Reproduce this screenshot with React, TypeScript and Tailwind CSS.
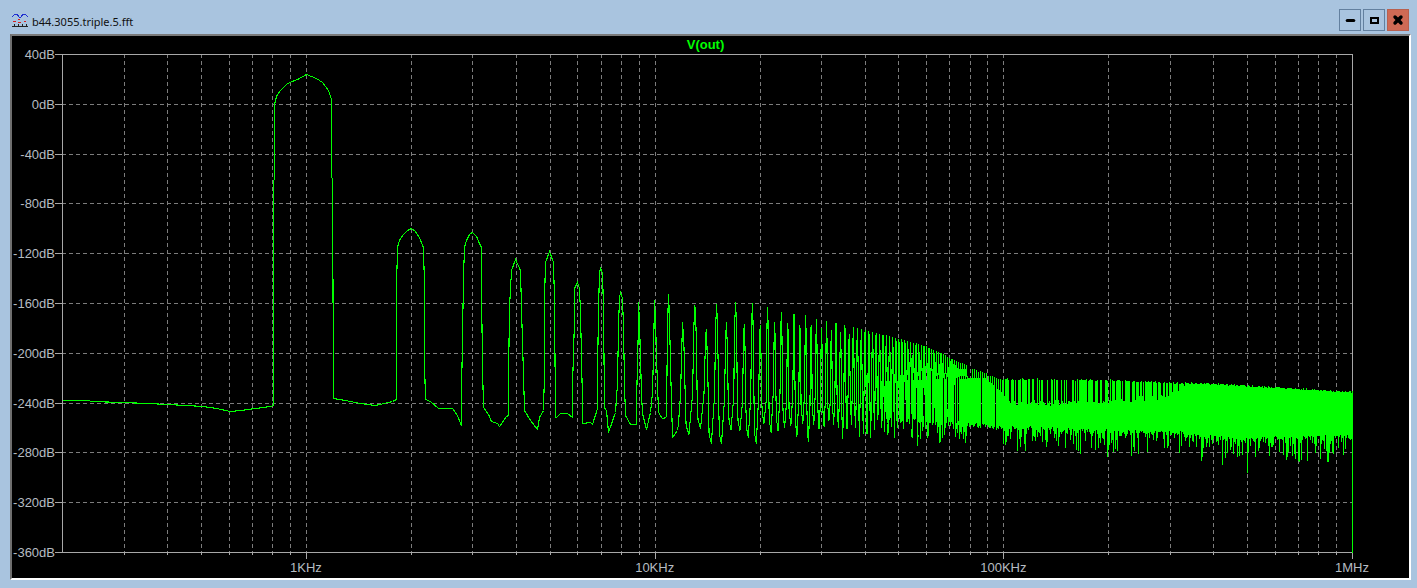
import { Minus, X } from 'lucide-react';

const PLOT_X = 62;
const PLOT_Y = 54;
const PLOT_W = 1290;
const PLOT_H = 498;
const DECADE = 348.7;

const DB_LABELS = ['40dB', '0dB', '-40dB', '-80dB', '-120dB', '-160dB', '-200dB', '-240dB', '-280dB', '-320dB', '-360dB'];
const FREQ_LABELS = ['1KHz', '10KHz', '100KHz', '1MHz'];

// x position (page px) of a frequency given in KHz
const freqX = (k: number) => 306 + DECADE * Math.log10(k);

// fundamental + first harmonics, traced from the plot by hand
const LOW_TRACE: [number, number][] = [
  [62, 400], [89, 400], [90, 401], [122, 402], [148, 403], [166, 404], [186, 405], [203, 406], [216, 408], [230, 411], [240, 410], [255, 408], [270, 406], [273, 405],
  [273, 180], [274, 179], [274, 104], [276, 96], [280, 90], [287, 83], [297, 79], [306, 74], [316, 78], [322, 82], [328, 90], [331, 99], [331, 177], [332, 178], [333, 398],
  [345, 400], [360, 403], [375, 405], [392, 401], [396, 399],
  [396, 362], [396, 287], [397, 247], [399, 240], [403, 234], [407, 230], [411, 228], [415, 231], [419, 237], [422, 245], [423, 247], [424, 287], [424, 362], [425, 399],
  [430, 401], [438, 408], [452, 408], [457, 415], [461, 425], [461, 395], [462, 337], [463, 277], [464, 247], [466, 240], [469, 234], [472, 232], [476, 236], [479, 243], [481, 247], [481, 287], [482, 366], [483, 407],
  [488, 414], [491, 421], [497, 423], [499, 426], [506, 416], [508, 415], [508, 379], [509, 307], [511, 270], [515, 259], [520, 270], [521, 308], [523, 375], [524, 410],
  [530, 420], [537, 429], [539, 417], [543, 410], [544, 373], [544, 299], [545, 262], [549, 251], [553, 262], [554, 300], [555, 417], [556, 417], [560, 413], [567, 413], [572, 417],
  [572, 385], [574, 320], [574, 288], [577, 282], [579, 288], [580, 312], [581, 357], [582, 402], [582, 423], [590, 422], [592, 424], [597, 408], [597, 375], [598, 308], [599, 273], [600, 267], [602, 273], [603, 308], [604, 407],
  [606, 410], [608, 432], [615, 412], [617, 383], [618, 327], [619, 297], [620, 292], [622, 298], [623, 327], [624, 385], [625, 415], [630, 424], [636, 424],
  [636, 403], [637, 363], [638, 322], [638, 302], [639, 322], [640, 358], [641, 393], [642, 413], [646, 429], [650, 412], [652, 392], [653, 353], [654, 300], [655, 320], [656, 357], [658, 412], [662, 418], [666, 417],
  [667, 327], [668, 294], [669, 318], [670, 365], [672, 437], [677, 430], [678, 423], [680, 395], [682, 322],
];

// measured spike tops for the harmonics just after the traced part
const TOPS: Record<number, number> = {
  13: 305, 14: 329, 15: 304, 16: 322, 17: 302, 18: 324, 19: 303, 20: 325, 21: 307, 22: 322, 23: 312, 24: 323, 25: 314, 26: 325, 27: 315,
};

const lerp = (table: [number, number][], x: number) => {
  if (x <= table[0][0]) return table[0][1];
  for (let i = 1; i < table.length; i++) {
    if (x <= table[i][0]) {
      const [x0, y0] = table[i - 1];
      const [x1, y1] = table[i];
      return y0 + ((y1 - y0) * (x - x0)) / (x1 - x0);
    }
  }
  return table[table.length - 1][1];
};

const ENVELOPE: [number, number][] = [[800, 315], [853, 327], [900, 339], [925, 346], [965, 365], [1000, 377], [1100, 378], [1233, 383], [1352, 390]];
const SOLID_TOP: [number, number][] = [[880, 380], [985, 377], [1010, 399], [1100, 398], [1170, 392], [1185, 381]];
const SOLID_BOTTOM: [number, number][] = [[880, 416], [1003, 424], [1100, 428], [1180, 430], [1230, 436], [1352, 433]];

const f1 = (n: number) => n.toFixed(1);

const buildTrace = () => {
  let seed = 44;
  const rnd = () => {
    seed = (seed * 16807) % 2147483647;
    return seed / 2147483647;
  };

  let d = 'M' + LOW_TRACE.map(([x, y]) => `${x} ${y}`).join('L');

  // single lobes, narrower and narrower on the log axis
  for (let n = 12; n <= 78; n++) {
    const cx = freqX(n);
    const hw = Math.max(1.1, DECADE * Math.log10(1 + 0.2 / n));
    const top = TOPS[n] ?? lerp(ENVELOPE, cx) + (n % 2 === 0 && n < 38 ? 8 : 0);
    const step = Math.min(top + 18, 372);
    const mid = Math.min(top + 62, 378);
    const foot = 392 + rnd() * 12;
    if (n > 12) {
      d += `L${f1(cx - hw)} ${foot.toFixed(0)}L${f1(cx - hw * 0.8)} ${mid.toFixed(0)}L${f1(cx - hw * 0.4)} ${step.toFixed(0)}L${f1(cx)} ${top.toFixed(0)}`;
    }
    d += `L${f1(cx + hw * 0.4)} ${step.toFixed(0)}L${f1(cx + hw * 0.8)} ${mid.toFixed(0)}L${f1(cx + hw)} ${(foot + 6).toFixed(0)}`;
    const next = freqX(n + 1);
    const valley = 420 + rnd() * 18 + (rnd() > 0.8 ? 7 : 0);
    // steep flank, then a shallow cup between two lobes
    d += `L${f1(cx + hw + 0.8)} ${(valley - 9).toFixed(0)}L${f1((cx + next) / 2)} ${valley.toFixed(0)}`;
  }

  // body of the spectrum where lobes merge: one vertical per column
  for (let x = 880; x < 1003; x++) {
    if (rnd() > 0.45 + ((x - 880) / 123) * 0.55) continue;
    d += `M${x} ${lerp(SOLID_TOP, x).toFixed(0)}L${x} ${(lerp(SOLID_BOTTOM, x) + rnd() * 5).toFixed(0)}`;
  }
  for (let x = 972; x < 1003; x += 2) {
    d += `M${x} ${(lerp(ENVELOPE, x) + rnd() * 2).toFixed(0)}L${x} 400`;
  }

  // past 100KHz the lobes are under a pixel wide
  for (let x = 1003; x < 1352; x++) {
    const env = lerp(ENVELOPE, x);
    const solidTop = lerp(SOLID_TOP, x);
    const solidBottom = lerp(SOLID_BOTTOM, x) + rnd() * 4;
    const pSpike = x < 1100 ? 0.6 : x < 1170 ? 0.72 : x < 1190 ? 0.92 : 0.995;
    const top = rnd() < pSpike ? env + rnd() * 2 : solidTop + rnd() * 6;
    const tail = Math.pow(rnd(), 3.2) * 26;
    d += `M${x} ${top.toFixed(0)}L${x} ${(solidBottom + tail).toFixed(0)}`;
  }
  d += 'M1247 430L1247 472M1352 390L1352 552';
  return d;
};

const TRACE = buildTrace();

const H_GRID = Array.from({ length: 9 }, (_, i) => PLOT_Y + ((i + 1) * PLOT_H) / 10);

const V_GRID: { x: number; major: boolean }[] = [];
for (let decade = 0.1; decade < 500; decade *= 10) {
  for (let m = 1; m <= 9; m++) {
    const k = decade * m;
    if (k < 0.25 || k > 1001) continue;
    V_GRID.push({ x: Math.round(freqX(k)), major: m === 1 });
  }
}
V_GRID.push({ x: PLOT_X + PLOT_W, major: true });

const Plot = () => (
  <svg
    width={PLOT_W + 1}
    height={PLOT_H + 1}
    viewBox={`${PLOT_X} ${PLOT_Y} ${PLOT_W + 1} ${PLOT_H + 1}`}
    className="block overflow-visible"
    shapeRendering="crispEdges"
  >
    <g stroke="#7c7c7c" strokeDasharray="4 3" fill="none">
      {H_GRID.map((y) => (
        <line key={y} x1={PLOT_X} x2={PLOT_X + PLOT_W} y1={Math.round(y) + 0.5} y2={Math.round(y) + 0.5} />
      ))}
      {V_GRID.slice(0, -1).map((g) => (
        <line key={g.x} x1={g.x + 0.5} x2={g.x + 0.5} y1={PLOT_Y} y2={PLOT_Y + PLOT_H} />
      ))}
    </g>
    <g stroke="#a8a8a8" fill="none">
      <rect x={PLOT_X + 0.5} y={PLOT_Y + 0.5} width={PLOT_W} height={PLOT_H} />
      {[PLOT_Y, ...H_GRID, PLOT_Y + PLOT_H].map((y) => (
        <line key={y} x1={PLOT_X - 7} x2={PLOT_X} y1={Math.round(y) + 0.5} y2={Math.round(y) + 0.5} />
      ))}
      {V_GRID.map((g) => (
        <line key={g.x} x1={g.x + 0.5} x2={g.x + 0.5} y1={PLOT_Y + PLOT_H} y2={PLOT_Y + PLOT_H + (g.major ? 7 : 3)} />
      ))}
    </g>
    <path d={TRACE} transform="translate(0.5 0.5)" stroke="#00ff00" strokeWidth={1.1} fill="none" />
  </svg>
);

const WaveIcon = () => (
  <svg width="17" height="16" viewBox="0 0 17 16" shapeRendering="crispEdges" fill="none">
    <path d="M0 5L3 2L5 2L7 5L9 5L11 2L13 2L16 5" stroke="#1f2fd0" />
    <path d="M1 9h3M6 7h2M6 10h3M12 9h2" stroke="#d81f1f" />
    <path d="M0 14h16M2 12v2M6 12v2M10 12v2M14 12v2" stroke="#222222" />
  </svg>
);

const WinButton = ({ children, close }: { children: React.ReactNode; close?: boolean }) => (
  <div
    className={`flex h-[22px] w-[22px] items-center justify-center border ${
      close ? 'border-[#b8604f] bg-[#cf6a55]' : 'border-[#63809f] bg-[#a9c4df]'
    }`}
  >
    {children}
  </div>
);

export default function App() {
  return (
    <div className="h-[588px] w-[1417px] overflow-hidden bg-[#a9c4df] font-['Liberation_Sans',Arial,sans-serif]">
      {/* title bar */}
      <div className="flex h-[34px] items-center pl-[12px] pr-[8px]">
        <div className="mt-[6px] flex items-center gap-[3px]">
          <WaveIcon />
          <span className="mt-[2px] font-['Noto_Sans',sans-serif] text-[11px] leading-none text-[#101010]">b44.3055.triple.5.fft</span>
        </div>
        <div className="ml-auto mt-[6px] flex gap-[2px]">
          <WinButton>
            <Minus size={11} strokeWidth={3.2} color="#000" absoluteStrokeWidth />
          </WinButton>
          <WinButton>
            <div className="h-[7px] w-[9px] border-2 border-black" />
          </WinButton>
          <WinButton close>
            <X size={12} strokeWidth={3.4} color="#000" absoluteStrokeWidth />
          </WinButton>
        </div>
      </div>

      {/* plot window */}
      <div className="ml-[10px] h-[546px] w-[1401px] border-2 border-b-white border-l-[#6f6f6f] border-r-white border-t-[#7a7a7a] bg-black">
        <div className="h-[18px] w-[1340px] pl-[50px] pr-[3px] pt-[2px] text-center text-[13px] font-bold leading-[14px] text-[#00ff00]">V(out)</div>
        <div className="flex">
          <div className="-mb-[9px] -mt-[7px] flex h-[514px] w-[43px] flex-col justify-between text-right text-[13px] leading-[16px] text-[#b6bcc2]">
            {DB_LABELS.map((l) => (
              <div key={l} className="-ml-[4px] h-[16px]">{l}</div>
            ))}
          </div>
          <div className="ml-[7px]">
            <Plot />
          </div>
        </div>
        <div className="ml-[119.65px] mt-[7px] flex text-[13px] leading-[16px] text-[#b6bcc2]">
          {FREQ_LABELS.map((l) => (
            <div key={l} className="w-[348.7px] shrink-0 text-center">{l}</div>
          ))}
        </div>
      </div>
    </div>
  );
}
